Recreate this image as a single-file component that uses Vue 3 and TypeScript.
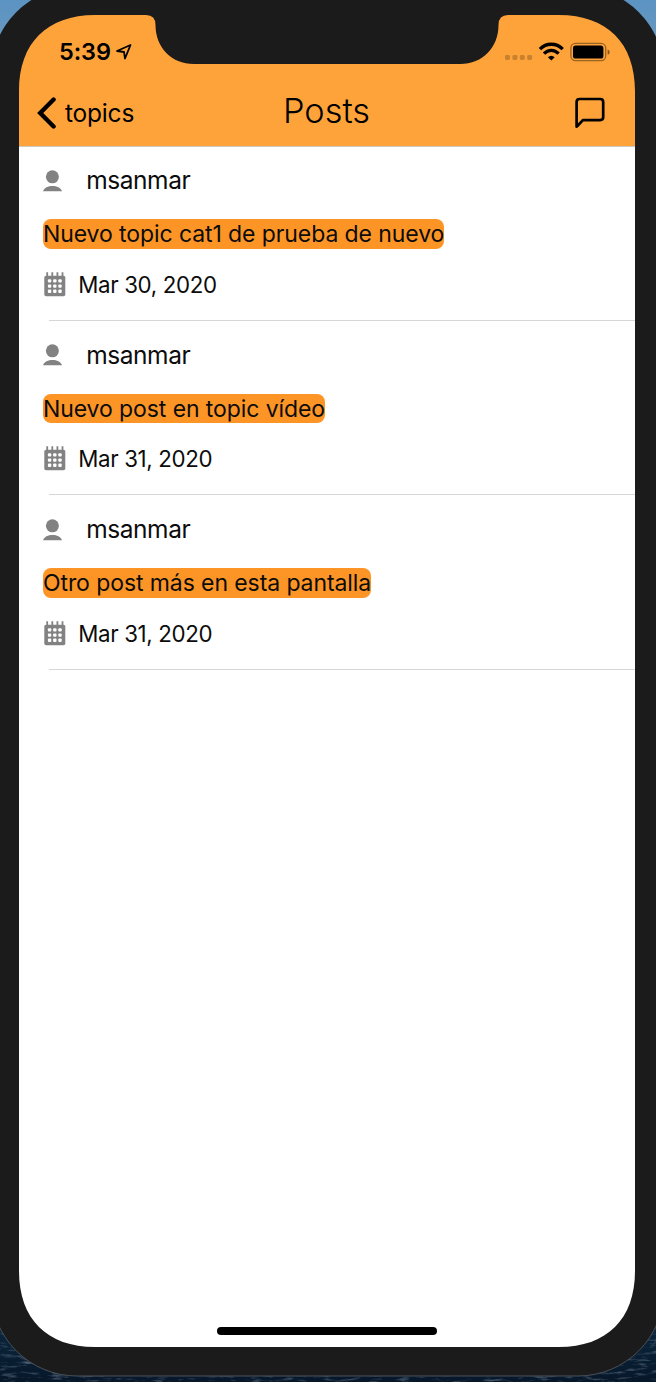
<script setup lang="ts">
interface Post {
  id: number
  author: string
  title: string
  date: string
}

const posts: Post[] = [
  { id: 1, author: 'msanmar', title: 'Nuevo topic cat1 de prueba de nuevo', date: 'Mar 30, 2020' },
  { id: 2, author: 'msanmar', title: 'Nuevo post en topic vídeo', date: 'Mar 31, 2020' },
  { id: 3, author: 'msanmar', title: 'Otro post más en esta pantalla', date: 'Mar 31, 2020' },
]

const columns: number[] = [3.9, 9.1, 14.3]
const rows: number[] = [7.2, 12.4, 17.6]
</script>

<template>
  <div class="desktop">
    <div class="sea">
      <svg width="656" height="70" viewBox="0 0 656 70">
        <filter id="waves" x="0" y="0" width="100%" height="100%">
          <feTurbulence type="fractalNoise" baseFrequency="0.06 0.3" numOctaves="4" seed="4" />
          <feColorMatrix values="0 0 0 0 0.3  0 0 0 0 0.4  0 0 0 0 0.5  1.3 0 0 0 -0.68" />
        </filter>
        <rect width="656" height="70" filter="url(#waves)" />
      </svg>
    </div>
    <div class="phone">
      <main class="screen">
        <header class="top">
          <div class="status">
            <span class="time">5:39</span>
            <svg class="arrow" width="18" height="18" viewBox="0 0 18 18">
              <path d="M2 8 L15.5 2 L10 15.5 L9 9 Z" fill="none" stroke="#000" stroke-width="1.8" stroke-linejoin="round" />
            </svg>
            <svg class="indicators" width="108" height="24" viewBox="0 0 108 24">
              <g fill="#000" opacity="0.2">
                <rect x="1" y="15" width="5" height="5" rx="1.4" />
                <rect x="8.4" y="15" width="5" height="5" rx="1.4" />
                <rect x="15.8" y="15" width="5" height="5" rx="1.4" />
                <rect x="23.1" y="15" width="5" height="5" rx="1.4" />
              </g>
              <g fill="none" stroke="#000" stroke-width="3.3">
                <path d="M35.9 9.2 C42.4 2.6 52.2 2.6 58.7 9.2" />
                <path d="M40 13.6 C44.2 9.2 50.4 9.2 54.6 13.6" />
              </g>
              <path d="M43.9 17.2 C46 15.2 48.6 15.2 50.7 17.2 L47.3 20.6 Z" fill="#000" />
              <rect x="66.9" y="3.4" width="34.8" height="17.2" rx="4.6" fill="none" stroke="#000" stroke-opacity="0.4" stroke-width="1.3" />
              <rect x="69" y="5.5" width="30.4" height="13" rx="2.6" />
              <path d="M103.6 9.4 C106.3 10.3 106.3 14 103.6 14.8 Z" opacity="0.45" />
            </svg>
          </div>
          <nav class="nav">
            <a class="back">
              <svg width="20" height="32" viewBox="0 0 20 32">
                <path d="M16.6 2.5 L3.2 16 L16.6 29.5" fill="none" stroke="#000" stroke-width="4.4" stroke-linecap="round" stroke-linejoin="miter" />
              </svg>
              <span>topics</span>
            </a>
            <h1 class="title">Posts</h1>
            <svg class="compose" width="32" height="32" viewBox="0 0 32 32">
              <path d="M2.6 29.6 V5 Q2.6 2 5.6 2 H26.2 Q29.2 2 29.2 5 V20.1 Q29.2 23.1 26.2 23.1 H8.9 L3.4 29 Z" fill="none" stroke="#000" stroke-width="2.7" stroke-linejoin="round" />
            </svg>
          </nav>
        </header>

        <ul class="posts">
          <li v-for="post in posts" :key="post.id" class="post">
            <div class="author">
              <svg width="20" height="22" viewBox="0 0 20 22">
                <circle cx="9.4" cy="6.8" r="6.5" fill="#828282" />
                <path d="M0 21.2 C2.2 14.2 16.8 14.2 19 21.2 Z" fill="#828282" />
              </svg>
              <span>{{ post.author }}</span>
            </div>
            <div class="topic"><span>{{ post.title }}</span></div>
            <div class="date">
              <svg width="22" height="25" viewBox="0 0 22 25">
                <rect x="0.3" y="3.7" width="21" height="20.6" rx="1.8" fill="#828282" />
                <path d="M3.2 0.3 V4 M8.3 0.3 V4 M13.4 0.3 V4 M18.5 0.3 V4" stroke="#828282" stroke-width="1.8" />
                <g fill="#fff">
                  <template v-for="y in rows" :key="y">
                    <rect v-for="x in columns" :key="x" :x="x" :y="y" width="3.4" height="3.4" rx="1" />
                  </template>
                </g>
              </svg>
              <span>{{ post.date }}</span>
            </div>
          </li>
        </ul>
        <div class="home"></div>
      </main>
      <svg class="bezel" width="656" height="1382" viewBox="0 0 656 1382">
        <path
          fill="#1b1b1b"
          fill-rule="evenodd"
          d="M-9 73 A86 86 0 0 1 77 -13 H578 A86 86 0 0 1 664 73 V1290 A86 86 0 0 1 578 1376 H77 A86 86 0 0 1 -9 1290 Z
             M19 91 V1271 C19 1319 47 1347 95 1347 H559 C607 1347 635 1319 635 1271 V91 C635 43 607 15 559 15 H508 Q498.5 15 498.5 25 C498.5 47 483 64 460 64 H194 C171 64 155.5 47 155.5 25 Q155.5 15 146 15 H95 C47 15 19 43 19 91 Z"
        />
        <path d="M-9 1290 A86 86 0 0 0 77 1376 H578 A86 86 0 0 0 664 1290" fill="none" stroke="#4a5059" stroke-width="1" />
      </svg>
    </div>
  </div>
</template>

<style>
body {
  margin: 0;
}
</style>

<style scoped>
.desktop {
  position: relative;
  width: 656px;
  height: 1382px;
  overflow: hidden;
  background: linear-gradient(#5b93c2 0, #6c99c0 50px, #0b2033 1200px);
  font-family: Inter, "Liberation Sans", sans-serif;
  color: #0c0c0c;
}

.sea {
  position: absolute;
  left: 0;
  bottom: 0;
  height: 70px;
  background: linear-gradient(#0c2a42, #07172a);
}

.sea svg {
  display: block;
}

.phone {
  position: relative;
  box-sizing: border-box;
  height: 1382px;
  padding: 15px 21px 35px 19px;
}

.bezel {
  position: absolute;
  left: 0;
  top: 0;
}

.screen {
  display: flex;
  flex-direction: column;
  height: 1332px;
  border-radius: 60px;
  overflow: hidden;
  background: #fff;
}

.top {
  box-sizing: border-box;
  height: 132px;
  background: #fea33a;
  border-bottom: 1px solid #cfc8bf;
  color: #000;
}

.status {
  display: flex;
  align-items: center;
  height: 49px;
  padding: 12px 23px 0 40px;
}

.time {
  font-size: 23.5px;
  font-weight: 600;
  line-height: 30px;
  letter-spacing: -0.1px;
}

.arrow {
  margin-left: 4px;
}

.indicators {
  margin-left: auto;
}

.nav {
  display: grid;
  grid-template-columns: 1fr auto 1fr;
  align-items: center;
  height: 50px;
  margin-top: 12px;
  padding: 0 29px 0 18px;
}

.back {
  display: flex;
  align-items: center;
  gap: 8px;
  font-size: 24.5px;
  letter-spacing: -0.2px;
}

.title {
  margin: -5px -5px 0 5px;
  font-size: 34.3px;
  font-weight: 300;
  line-height: 42px;
}

.compose {
  justify-self: end;
}

.posts {
  margin: 0;
  padding: 0;
  list-style: none;
}

.post {
  position: relative;
  box-sizing: border-box;
  height: 174.6px;
  padding: 17px 0 0 24px;
}

.post::after {
  content: "";
  position: absolute;
  left: 30px;
  right: 0;
  bottom: 0.8px;
  height: 1px;
  background: #d6d6d6;
}

.author {
  display: flex;
  align-items: center;
  gap: 23.3px;
  height: 32px;
  font-size: 24.5px;
  letter-spacing: -0.45px;
}

.author svg {
  margin-top: 1px;
}

.topic {
  display: flex;
  height: 30px;
  margin-top: 23px;
}

.topic span {
  height: 29.5px;
  border-radius: 8px;
  background: #fd9526;
  font-size: 23px;
  line-height: 30px;
  letter-spacing: -0.09px;
  white-space: nowrap;
}

.date {
  display: flex;
  align-items: center;
  gap: 12.3px;
  height: 30px;
  margin-top: 20px;
  padding-left: 1px;
  font-size: 22.3px;
  letter-spacing: -0.36px;
}

.home {
  width: 220px;
  height: 8px;
  margin: auto auto 12px 198px;
  border-radius: 4px;
  background: #000;
}
</style>
